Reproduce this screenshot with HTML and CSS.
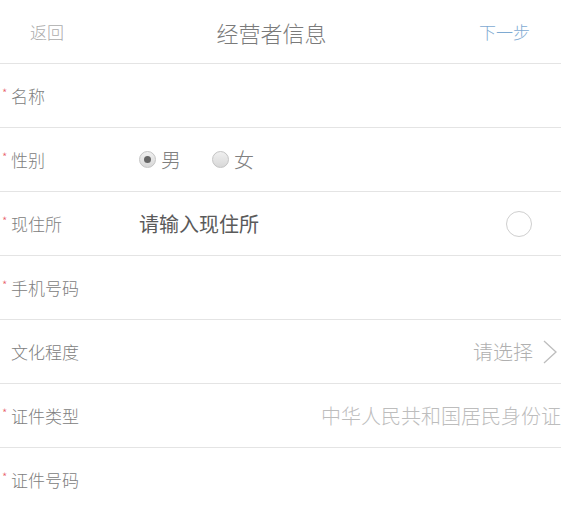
FILE: index.html
```html
<!DOCTYPE html>
<html lang="zh-CN">
<head>
    <meta charset="UTF-8">
    <meta name="viewport" content="width=device-width, initial-scale=1.0">
    <title>经营者信息</title>
    <link rel="stylesheet" href="styles.css">
</head>
<body>

<div class="header">
    <span class="back">返回</span>
    <span class="title">经营者信息</span>
    <span class="next">下一步</span>
</div>

<div class="form">
    <div class="row">
        <label class="label"><i class="star">*</i>名称</label>
    </div>

    <div class="row">
        <label class="label"><i class="star">*</i>性别</label>
        <div class="radios">
            <span class="radio checked"></span><span class="radio-text">男</span>
            <span class="radio"></span><span class="radio-text">女</span>
        </div>
    </div>

    <div class="row">
        <label class="label"><i class="star">*</i>现住所</label>
        <span class="input">请输入现住所</span>
        <span class="locate"></span>
    </div>

    <div class="row">
        <label class="label"><i class="star">*</i>手机号码</label>
    </div>

    <div class="row select-row">
        <label class="label"><i class="star"></i>文化程度</label>
        <span class="choose">请选择</span>
        <svg class="arrow" width="14" height="24" viewBox="0 0 14 24">
            <polyline points="1,1 13,12 1,23" fill="none" stroke="#bdbdbd" stroke-width="1.3"/>
        </svg>
    </div>

    <div class="row id-row">
        <label class="label"><i class="star">*</i>证件类型</label>
        <span class="id-type">中华人民共和国居民身份证</span>
    </div>

    <div class="row">
        <label class="label"><i class="star">*</i>证件号码</label>
    </div>
</div>

</body>
</html>
```

FILE: styles.css
```css
body {
    margin: 0;
    background-color: #fff;
    font-family: "Noto Sans CJK SC", "Liberation Sans", sans-serif;
    font-weight: 300;
    overflow: hidden;
}

.header {
    display: flex;
    justify-content: space-between;
    align-items: center;
    height: 63px;
    padding: 0 31px 0 30px;
    border-bottom: 1px solid #e4e4e4;
}

.back {
    font-size: 17px;
    color: #ababab;
}

.title {
    font-size: 22px;
    color: #7a7a7a;
    padding-top: 1px;
}

.next {
    font-size: 17px;
    color: #7eaad2;
}

.row {
    display: flex;
    align-items: center;
    height: 63px;
    border-bottom: 1px solid #e4e4e4;
}

.row:last-child {
    border-bottom: none;
}

.label {
    display: flex;
    align-items: center;
    width: 137px;
    padding-left: 2px;
    font-size: 17px;
    color: #808080;
}

.star {
    width: 9px;
    font-style: normal;
    font-size: 12px;
    color: #e8616a;
    align-self: flex-start;
    margin-top: 1px;
}

.radios {
    display: flex;
    align-items: center;
}

.radio {
    width: 15px;
    height: 15px;
    border-radius: 50%;
    border: 1px solid #c4c4c4;
    background: linear-gradient(#f0f0f0, #d8d8d8);
    box-sizing: content-box;
    position: relative;
}

.radio.checked::after {
    content: "";
    position: absolute;
    left: 4px;
    top: 4px;
    width: 7px;
    height: 7px;
    border-radius: 50%;
    background-color: #666;
}

.radio-text {
    font-size: 20px;
    color: #808080;
    margin-left: 5px;
    margin-right: 31px;
}

.input {
    font-size: 20px;
    color: #5a5a5a;
    font-weight: 400;
}

.locate {
    margin-left: auto;
    margin-right: 29px;
    width: 24px;
    height: 24px;
    border-radius: 50%;
    border: 1px solid #cfcfcf;
}

.choose {
    margin-left: auto;
    font-size: 20px;
    color: #b0b0b0;
}

.arrow {
    margin-left: 10px;
    margin-right: 4px;
}

.id-type {
    margin-left: auto;
    font-size: 20px;
    color: #bdbdbd;
    white-space: nowrap;
}
```
